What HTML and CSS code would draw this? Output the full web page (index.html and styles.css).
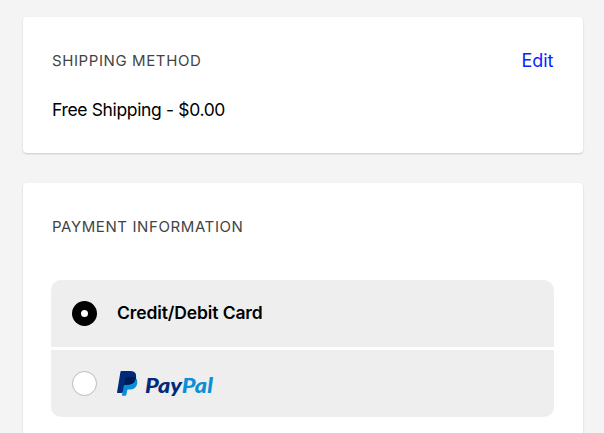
FILE: index.html
```html
<!DOCTYPE html>
<html lang="en">
<head>
  <meta charset="UTF-8" />
  <meta name="viewport" content="width=device-width, initial-scale=1.0"/>
  <title>Checkout</title>
  <link rel="stylesheet" href="styles.css">
</head>
<body>
  <section class="card shipping">
    <div class="card-header">
      <h2>SHIPPING METHOD</h2>
      <a href="#" class="edit">Edit</a>
    </div>
    <p class="method">Free Shipping - $0.00</p>
  </section>

  <section class="card payment">
    <div class="card-header">
      <h2 class="payment-title">PAYMENT INFORMATION</h2>
    </div>
    <div class="options">
      <label class="option">
        <input type="radio" name="payment" value="card" checked />
        <span class="option-name">Credit/Debit Card</span>
      </label>
      <label class="option">
        <input type="radio" name="payment" value="paypal" />
        <span class="paypal">
          <svg class="paypal-icon" width="21" height="25" viewBox="0 0 21 25">
            <path fill="#0a8fd6" d="M8 7h11q2 2 1.300 5.500q-1.200 6-7.500 6h-1.600q-.8 0-1 .9l-.8 4.400q-.2.900-1.200.9H5.600q-.8 0-.6-.9z"/>
            <path fill="#012a78" d="M4.500 0H13q7.200 0 6 6.700q-1.200 7-8.400 7H8.100q-.9 0-1.100 1l-1.300 6.600q-.1.800-1 .8H.9q-1 0-.8-1L3.400 1q.1-1 1.100-1z"/>
            <path fill="#001b55" d="M8.800 6.100h8.700q.8 0 1.500.4q-1.100 7.200-8.400 7.200H8.100q-.6 0-.9.500l1.200-7.500q.1-.6.400-.6z"/>
          </svg>
          <span class="paypal-name">Pay<span class="pal">Pal</span></span>
        </span>
      </label>
    </div>
  </section>
</body>
</html>
```

FILE: styles.css
```css
* {
  box-sizing: border-box;
}
body {
  margin: 0;
  padding: 17px 21.5px 0 23px;
  height: 433px;
  font-family: Inter, "Liberation Sans", sans-serif;
  background-color: #f4f4f4;
  color: #000;
}
.card {
  background-color: white;
  border-radius: 4px;
  box-shadow: 0 1px 2px rgba(0, 0, 0, 0.18);
}
.shipping {
  height: 136px;
  padding: 31px 29px 0;
}
.payment {
  height: 250px;
  margin-top: 30px;
  padding: 31px 28.5px 0 28px;
  border-radius: 4px 4px 0 0;
}
.card-header {
  display: flex;
  justify-content: space-between;
  align-items: center;
  height: 24px;
}
h2 {
  margin: 0;
  font-size: 15px;
  font-weight: 400;
  letter-spacing: 0.6px;
  color: #444;
}
.payment-title {
  padding-left: 1px;
}
.edit {
  font-size: 18px;
  color: #0a24fa;
  text-decoration: none;
}
.method {
  margin: 26px 0 0;
  font-size: 17.5px;
  letter-spacing: -0.35px;
  line-height: 24px;
}
.options {
  display: grid;
  gap: 3px;
  margin-top: 42px;
  border-radius: 10px;
  overflow: hidden;
}
.option {
  display: flex;
  align-items: center;
  height: 67px;
  padding-left: 21px;
  background-color: #eee;
}
input {
  appearance: none;
  width: 25px;
  height: 25px;
  margin: 0 20px 0 0;
  border: 1px solid #bbb;
  border-radius: 50%;
  background-color: white;
}
input:checked {
  border: 9px solid #000;
}
.option-name {
  padding-bottom: 2px;
  font-size: 17.5px;
  font-weight: 600;
  letter-spacing: -0.12px;
}
.paypal {
  display: flex;
  align-items: center;
}
.paypal-name {
  margin: 3px 0 0 7px;
  font-family: Lato, sans-serif;
  font-size: 20px;
  font-style: italic;
  font-weight: 900;
  line-height: 24px;
  color: #012a78;
  transform: scaleX(1.17);
  transform-origin: left;
}
.pal {
  color: #0a8fd6;
}
```
